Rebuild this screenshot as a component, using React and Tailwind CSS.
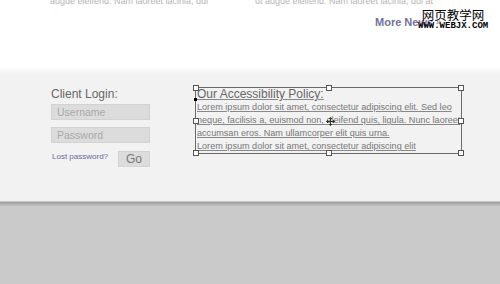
import React from "react";

const font = { fontFamily: '"Liberation Sans", Arial, sans-serif' };

function Handle({ className }) {
  return (
    <span
      className={`absolute w-[6px] h-[6px] bg-white border border-[#555] ${className}`}
    />
  );
}

function MoveCursor() {
  return (
    <svg
      width="9"
      height="9"
      viewBox="0 0 9 9"
      className="absolute left-[130px] top-[29px]"
    >
      <path
        d="M4.5 0.5v8M0.5 4.5h8M4.5 0.5l-1.5 1.5M4.5 0.5l1.5 1.5M4.5 8.5l-1.5-1.5M4.5 8.5l1.5-1.5M0.5 4.5l1.5-1.5M0.5 4.5l1.5 1.5M8.5 4.5l-1.5-1.5M8.5 4.5l-1.5 1.5"
        stroke="#333"
        strokeWidth="1"
        fill="none"
      />
    </svg>
  );
}

export default function App() {
  return (
    <div className="w-[500px] h-[284px] flex flex-col bg-white overflow-hidden" style={font}>
      {/* top news area */}
      <div className="h-[66px] relative">
        <div className="h-[6px] overflow-hidden flex text-[9px] leading-[10px] text-[#b4b4b4]">
          <div className="pl-[50px] w-[255px] -mt-[4px] whitespace-nowrap">
            augue eleifend. Nam laoreet lacinia, dui
          </div>
          <div className="-mt-[4px] whitespace-nowrap">
            ut augue eleifend. Nam laoreet lacinia, dui at
          </div>
        </div>
        <div className="flex pl-[375px] mt-[10px]">
          <div className="text-[11px] leading-[13px] font-bold text-[#72729a] flex items-center gap-[3px]">
            More News <span className="text-[#999] text-[9px]">»</span>
          </div>
        </div>
        {/* watermark */}
        <div className="absolute left-[418px] top-[7px] flex flex-col items-center">
          <div
            className="text-[12.5px] leading-[15px] text-black"
            style={{ fontFamily: '"Noto Sans CJK SC", sans-serif' }}
          >
            网页教学网
          </div>
          <div
            className="text-[9px] leading-[8px] font-bold text-black"
            style={{ fontFamily: '"Liberation Mono", monospace' }}
          >
            WWW.WEBJX.COM
          </div>
        </div>
      </div>

      {/* footer band */}
      <div className="h-[135px] bg-[linear-gradient(to_bottom,#ffffff,#f2f2f2_9px)] flex items-start pt-[21px] pl-[51px]">
        <div className="w-[99px] flex flex-col">
          <div className="text-[12px] leading-[14px] text-[#666]">Client Login:</div>
          <input
            className="mt-[3px] h-[16px] w-full bg-[#dcdcdc] border border-[#d2d2d2] px-[5px] text-[10.5px] outline-none placeholder:text-[#a9a9a9]"
            placeholder="Username"
          />
          <input
            className="mt-[7px] h-[16px] w-full bg-[#dcdcdc] border border-[#d2d2d2] px-[5px] text-[10.5px] outline-none placeholder:text-[#a9a9a9]"
            placeholder="Password"
          />
          <div className="mt-[8px] flex items-start justify-between">
            <span className="text-[8px] leading-[10px] text-[#68689a] pl-[1px] pt-[1px]">
              Lost password?
            </span>
            <button className="w-[32px] h-[16px] bg-[#dcdcdc] border border-[#d4d4d4] text-[12px] leading-[14px] text-[#777]">
              Go
            </button>
          </div>
        </div>

        <div className="ml-[45px] relative w-[267px] h-[67px] border border-[#6a6a6a]">
          <div className="pl-[1px] text-[#777] underline decoration-[#888] underline-offset-[1px]">
            <div className="text-[12px] leading-[13px] text-[#666]">Our Accessibility Policy:</div>
            <div className="text-[9.1px] leading-[13px] whitespace-nowrap">
              Lorem ipsum dolor sit amet, consectetur adipiscing elit. Sed leo
            </div>
            <div className="text-[9.1px] leading-[13px] whitespace-nowrap">
              neque, facilisis a, euismod non, eleifend quis, ligula. Nunc laoreet
            </div>
            <div className="text-[9.1px] leading-[13px] whitespace-nowrap">
              accumsan eros. Nam ullamcorper elit quis urna.
            </div>
            <div className="text-[9.1px] leading-[13px] whitespace-nowrap">
              Lorem ipsum dolor sit amet, consectetur adipiscing elit
            </div>
          </div>
          <Handle className="-left-[3px] -top-[3px]" />
          <Handle className="left-[130px] -top-[3px]" />
          <Handle className="-right-[3px] -top-[3px]" />
          <Handle className="-left-[3px] top-[30px]" />
          <Handle className="-right-[3px] top-[30px]" />
          <Handle className="-left-[3px] -bottom-[3px]" />
          <Handle className="left-[130px] -bottom-[3px]" />
          <Handle className="-right-[3px] -bottom-[3px]" />
          <span className="absolute -left-[2px] top-[10px] w-[3px] h-[3px] bg-black" />
          <MoveCursor />
        </div>
      </div>

      {/* bottom edge */}
      <div className="h-px bg-[#c4c4c4]" />
      <div className="h-[4px] bg-[linear-gradient(to_bottom,#9c9c9c,#c4c4c4)]" />
      <div className="flex-1 bg-[#cacaca]" />
    </div>
  );
}
